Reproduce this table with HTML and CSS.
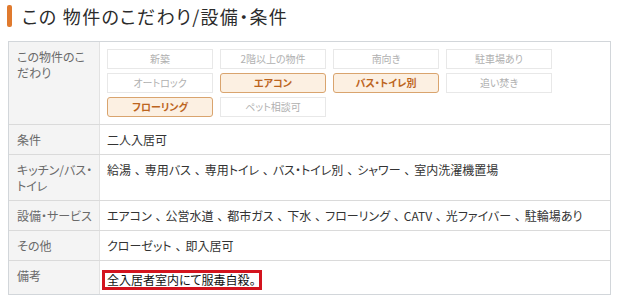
FILE: index.html
```html
<!DOCTYPE html>
<html lang="ja">
<head>
<meta charset="utf-8">
<title>この物件のこだわり/設備・条件</title>
<link rel="stylesheet" href="styles.css">
</head>
<body>
<section class="features">
  <h2 class="heading">この 物件のこだわり/設備・条件</h2>
  <div class="spec">
    <div class="row row-tags">
      <div class="label">この物件のこ<br>だわり</div>
      <div class="value">
        <ul class="tags">
          <li class="tag">新築</li>
          <li class="tag">2階以上の物件</li>
          <li class="tag">南向き</li>
          <li class="tag">駐車場あり</li>
          <li class="tag">オートロック</li>
          <li class="tag on">エアコン</li>
          <li class="tag on">バス・トイレ別</li>
          <li class="tag">追い焚き</li>
          <li class="tag on">フローリング</li>
          <li class="tag">ペット相談可</li>
        </ul>
      </div>
    </div>
    <div class="row">
      <div class="label">条件</div>
      <div class="value">二人入居可</div>
    </div>
    <div class="row">
      <div class="label">キッチン/バス・<br>トイレ</div>
      <div class="value">給湯 、 専用バス 、 専用トイレ 、 バス・トイレ別 、 シャワー 、 室内洗濯機置場</div>
    </div>
    <div class="row">
      <div class="label">設備・サービス</div>
      <div class="value">エアコン 、 公営水道 、 都市ガス 、 下水 、 フローリング 、 CATV 、 光ファイバー 、 駐輪場あり</div>
    </div>
    <div class="row">
      <div class="label">その他</div>
      <div class="value">クローゼット 、 即入居可</div>
    </div>
    <div class="row">
      <div class="label">備考</div>
      <div class="value"><span class="note">全入居者室内にて服毒自殺。</span></div>
    </div>
  </div>
</section>
</body>
</html>
```

FILE: styles.css
```css
html, body {
  margin: 0;
  padding: 0;
  background: #ffffff;
}

body {
  font-family: "Noto Sans CJK JP", "Noto Sans", sans-serif;
  font-feature-settings: "palt";
  color: #333333;
}

.features {
  width: 620px;
}

.heading {
  margin: 5px 0 14px 7px;
  height: 22px;
  display: flex;
  align-items: center;
  gap: 10px;
  font-size: 18px;
  font-weight: normal;
  line-height: 22px;
  letter-spacing: 1.3px;
  color: #2b2b2b;
}

.heading::before {
  content: "";
  display: block;
  width: 5px;
  height: 22px;
  border-radius: 2px;
  background: #e07a2e;
}

.spec {
  margin-left: 8px;
  width: 601px;
  border: 1px solid #d2d6da;
}

.row {
  display: grid;
  grid-template-columns: 91px 1fr;
  border-top: 1px solid #dadada;
}

.row:first-child {
  border-top: none;
}

.label {
  background: #f4f4f4;
  border-right: 1px solid #e2e2e2;
  padding: 7px 6px 6px 8px;
  font-size: 12px;
  line-height: 16px;
  color: #6a6a6a;
}

.value {
  padding: 7px 8px 6px 7px;
  font-size: 12px;
  line-height: 16px;
  word-spacing: 1.2px;
  color: #333333;
}

.row-tags .label {
  padding-bottom: 7px;
}

.row-tags .value {
  padding-top: 7px;
  padding-bottom: 7px;
}

.tags {
  list-style: none;
  margin: 0;
  padding: 0;
  display: grid;
  grid-template-columns: repeat(4, 106px);
  column-gap: 7px;
  row-gap: 4px;
}

.tag {
  height: 20px;
  box-sizing: border-box;
  border: 1px solid #e8e8e8;
  display: flex;
  align-items: center;
  justify-content: center;
  font-size: 10px;
  line-height: 12px;
  word-spacing: 0;
  color: #b0b0b0;
}

.tag.on {
  background: #fcf0e2;
  border-color: #d9a46e;
  border-radius: 3px;
  color: #bc651e;
  font-weight: bold;
}

.note {
  display: inline-block;
  margin: 2px 0 -2px -5px;
  padding: 0 3px 0 2px;
  border: 3px solid #d3141e;
  line-height: 14px;
  color: #111111;
}
```
